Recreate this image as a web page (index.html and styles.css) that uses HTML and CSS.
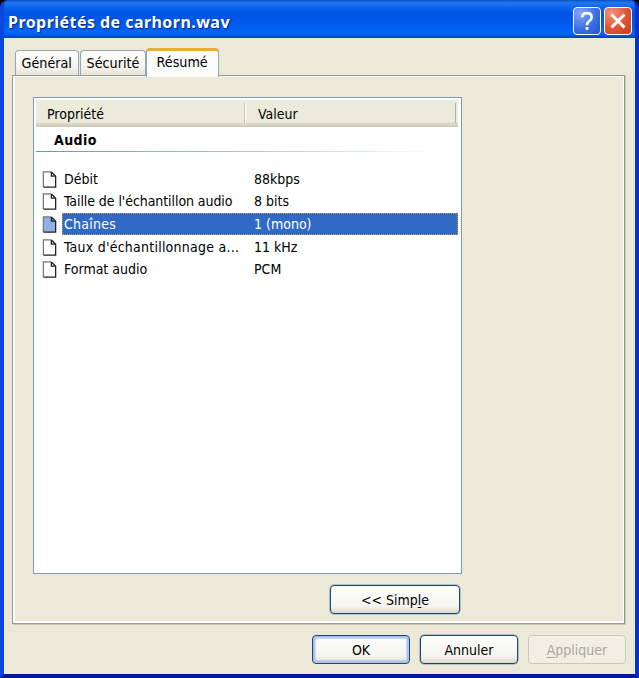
FILE: index.html
```html
<!DOCTYPE html>
<html lang="fr">
<head>
<meta charset="utf-8">
<title>Propriétés de carhorn.wav</title>
<link rel="stylesheet" href="styles.css">
</head>
<body>
<svg width="0" height="0" class="defs"><symbol id="page" viewBox="0 0 15 18"><path d="M1 1H9.5L14 5.5V17H1Z" class="sheet"/><path d="M1 17V1H9.5" fill="none" stroke="#777" stroke-width="1.3"/><path d="M9.5 1V5.5H14M9.5 1L14 5.5V17H1" fill="none" stroke="#222" stroke-width="1.4"/></symbol></svg>
<div class="window">
  <header class="titlebar">
    <h1>Propriétés de carhorn.wav</h1>
    <div class="caption help"><svg viewBox="0 0 28 28"><path d="M9 10Q9 5.5 14 5.5Q19 5.5 19 10Q19 12.5 16 14.5Q14 16 14 18.5" fill="none" stroke="#fff" stroke-width="2.8"/><rect x="12.5" y="20.5" width="3" height="3" fill="#fff"/></svg></div>
    <div class="caption close"><svg viewBox="0 0 28 28"><path d="M7 7L21 21M21 7L7 21" stroke="#fff" stroke-width="3.2"/></svg></div>
  </header>
  <main class="body">
    <nav class="tabs">
      <div class="tab general"><span>Général</span></div>
      <div class="tab securite"><span>Sécurité</span></div>
      <div class="tab active"><span>Résumé</span></div>
    </nav>
    <section class="panel">
      <div class="list">
        <div class="head"><span class="c1">Propriété</span><span class="c2">Valeur</span></div>
        <div class="group">Audio</div>
        <div class="rows">
          <div class="row"><svg class="icon"><use href="#page"/></svg><div class="cells"><span class="name">Débit</span><span class="val">88kbps</span></div></div>
          <div class="row"><svg class="icon"><use href="#page"/></svg><div class="cells"><span class="name tight">Taille de l'échantillon audio</span><span class="val">8 bits</span></div></div>
          <div class="row selected"><svg class="icon"><use href="#page"/></svg><div class="cells"><span class="name wide">Chaînes</span><span class="val">1 (mono)</span></div></div>
          <div class="row"><svg class="icon"><use href="#page"/></svg><div class="cells"><span class="name wide">Taux d'échantillonnage a...</span><span class="val">11 kHz</span></div></div>
          <div class="row"><svg class="icon"><use href="#page"/></svg><div class="cells"><span class="name">Format audio</span><span class="val">PCM</span></div></div>
        </div>
      </div>
      <button class="btn simple"><span>&lt;&lt; Simp<u>l</u>e</span></button>
    </section>
    <footer class="actions">
      <button class="btn default"><span>OK</span></button>
      <button class="btn"><span>Annuler</span></button>
      <button class="btn disabled"><span><u>A</u>ppliquer</span></button>
    </footer>
  </main>
</div>
</body>
</html>
```
FILE: styles.css
```css
* { box-sizing: border-box; }
body { margin: 0; background: #000; font: 14px "DejaVu Sans Condensed", "DejaVu Sans", sans-serif; font-stretch: condensed; color: #000; overflow: hidden; }
.defs { display: block; }
.window { width: 639px; height: 678px; border: solid; border-width: 0 4px 4px; border-color: transparent #0831c8 #001a9c #0b46df; border-radius: 8px 8px 0 0; background: #0b46df; display: flex; flex-direction: column; overflow: hidden; }
.titlebar { height: 38px; margin: 0 -4px; padding: 0 7px 0 8px; display: flex; align-items: center; background: linear-gradient(#0a50c8 0, #2478f0 3px, #0965ee 7px, #0054e3 14px, #0058ec 23px, #0066fc 33px, #0053d8 36px, #003dbb 38px); }
h1 { margin: 5px 0 0; flex: 1; font: bold 16px/24px "Noto Sans", sans-serif; color: #fff; text-shadow: 1px 1px 1px #052a80; white-space: nowrap; letter-spacing: .45px; }
.caption { width: 28px; height: 28px; border: 1px solid #fff; border-radius: 4px; margin: 3px 0 0 3px; }
.caption svg { display: block; width: 26px; height: 26px; }
.help { background: radial-gradient(circle at 25% 20%, #83a6f5, #3c6ee5 55%, #2456cf); }
.close { background: radial-gradient(circle at 25% 20%, #ee9478, #df5434 55%, #c83a18); }
.body { flex: 1; background: #ece9d8; padding: 10px 10px 0 8px; }
.tabs { height: 27px; display: flex; align-items: flex-end; padding-left: 3px; }
.tab { height: 25px; border: 1px solid #91a7b4; border-bottom: 0; border-radius: 4px 4px 0 0; background: linear-gradient(#fff, #f4f3ec 70%, #e5e2d4); display: flex; justify-content: center; line-height: 25px; white-space: nowrap; }
.tab span, .btn span { display: block; }
.general { width: 64px; }
.securite { width: 66px; margin-left: 1px; }
.active { width: 73px; height: 29px; border-top: 3px solid #eeaa38; margin-bottom: -2px; background: #fcfcfa; position: relative; line-height: 23px; }
.tab span { transform: scaleX(.98); font-size: 14.5px; }
.panel { height: 549px; width: 613px; border: 1px solid #919b9c; background: #ece9d8; box-shadow: inset 2px 0 #fff, inset -1px -2px #fff, inset 0 1px #f8f7f0, 1px 1px #c9c6b9; padding: 21px 0 0 20px; }
.list { width: 429px; height: 477px; border: 1px solid #7f9db9; background: #fff; padding: 2px; }
.head { width: 422px; height: 27px; background: linear-gradient(#ebeadb 22px, #e2decd 23px, #cbc7b8 27px); display: flex; line-height: 23px; padding-top: 3px; }
.c1, .c2 { height: 20px; line-height: 22px; }
.c1 { width: 209px; padding-left: 11px; border-right: 1px solid #c5c2b4; box-shadow: 1px 0 #fff; }
.c2 { width: 211px; padding-left: 13px; border-right: 1px solid #b4b5a8; }
.group { height: 25px; width: 400px; font-weight: bold; letter-spacing: .4px; line-height: 26px; padding-left: 18px; background: linear-gradient(90deg, #5b95e3, #a5c1ea 50%, #fff) bottom / 100% 1.5px no-repeat; }
.rows { padding: 16px 0 0 6px; }
.row { height: 22.6px; display: flex; align-items: center; }
.icon { width: 15px; height: 17px; margin-right: 5px; display: block; }
.sheet { fill: var(--page, #fff); }
.cells { width: 396px; height: 22px; display: flex; line-height: 20px; border: 1px solid transparent; align-items: center; white-space: nowrap; }
.name, .val { position: relative; top: -0.5px; }
.name { width: 191px; padding-left: 1px; }
.tight { letter-spacing: -.07px; }
.wide { letter-spacing: .24px; }
.selected { --page: #91afe7; }
.selected .cells { background: #316ac5; color: #fff; border: 1px dotted #b99b58; }
.btn { width: 98px; height: 29px; padding: 0; border: 1px solid #1e4770; border-radius: 4px; background: linear-gradient(#fff, #f5f4ef 75%, #dcd8cb); font: inherit; color: #000; display: flex; justify-content: center; align-items: center; box-shadow: 0 0 0 .5px #7e98b2; }
.btn u { text-underline-offset: 2px; }
.simple { width: 130px; margin: 11px 0 0 297px; }
.default { box-shadow: inset 0 0 0 2.5px #a8c4ef; }
.actions { display: flex; justify-content: flex-end; gap: 10px; padding-top: 11px; margin-right: -1px; }
.disabled { color: #aaa899; border-color: #cac8bb; background: #f1efe3; box-shadow: none; }
```
